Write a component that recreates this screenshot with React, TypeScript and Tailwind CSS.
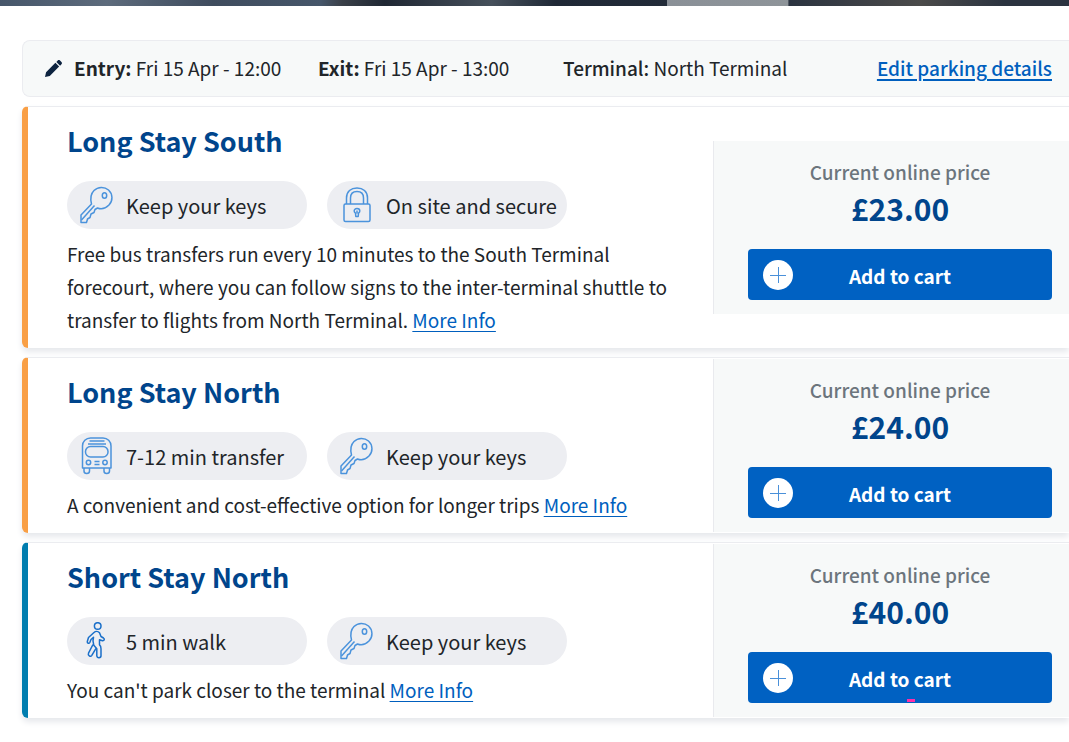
import React from 'react'

type Accent = 'orange' | 'blue'
type FeatureIcon = 'key' | 'lock' | 'bus' | 'walk'

interface Feature {
  icon: FeatureIcon
  label: string
}

interface ParkingOption {
  id: string
  name: string
  accent: Accent
  features: Feature[]
  description: string
  price: string
  flagged?: boolean
}

const options: ParkingOption[] = [
  {
    id: 'long-stay-south',
    name: 'Long Stay South',
    accent: 'orange',
    features: [
      { icon: 'key', label: 'Keep your keys' },
      { icon: 'lock', label: 'On site and secure' }
    ],
    description:
      'Free bus transfers run every 10 minutes to the South Terminal forecourt, where you can follow signs to the inter-terminal shuttle to transfer to flights from North Terminal.',
    price: '£23.00'
  },
  {
    id: 'long-stay-north',
    name: 'Long Stay North',
    accent: 'orange',
    features: [
      { icon: 'bus', label: '7-12 min transfer' },
      { icon: 'key', label: 'Keep your keys' }
    ],
    description: 'A convenient and cost-effective option for longer trips',
    price: '£24.00'
  },
  {
    id: 'short-stay-north',
    name: 'Short Stay North',
    accent: 'blue',
    features: [
      { icon: 'walk', label: '5 min walk' },
      { icon: 'key', label: 'Keep your keys' }
    ],
    description: "You can't park closer to the terminal",
    price: '£40.00',
    flagged: true
  }
]

const KeyIcon = () => (
  <>
    <path d="M12.500 18C11 12 12 7.500 15 4.500c4-4 10.500-4 14.500-.5 4.500 4 4.500 11 .5 15-3.500 3.500-8 4.500-11.500 3l-2.500 1.500-1 3-3 1.500-1 3.500-2.500 1.500-1 3.500H2v-7.500z" />
    <path d="m2.500 34 13-14.500" />
    <ellipse cx="25.500" cy="9.500" rx="2.200" ry="2.800" />
  </>
)

const LockIcon = () => (
  <>
    <rect x="5" y="18" width="26" height="17.500" rx="1.500" />
    <path d="M7.500 18v-6C7.500 5.500 12 2 18 2s10.500 3.500 10.500 10v6" />
    <path d="M11.500 18v-6c0-4 2.500-6.500 6.500-6.500s6.500 2.500 6.500 6.500v6" />
    <path d="M18 22.500c-1.800 0-2.800 1.200-2.800 2.500 0 1 .6 1.700 1.300 2.200l.3 3.300h2.400l.3-3.300c.7-.5 1.300-1.200 1.300-2.200 0-1.300-1-2.500-2.800-2.500zM18 24.500v3" />
  </>
)

const BusIcon = () => (
  <>
    <path d="M3.500 31V9c0-4.500 3.500-8 8-8h12.500c4.500 0 8 3.500 8 8v22z" />
    <path d="M10.500 4h15M9 7h18" />
    <rect x="6.500" y="9.500" width="22.500" height="10.500" rx="5" />
    <circle cx="9.500" cy="25.500" r="2.200" />
    <circle cx="26" cy="25.500" r="2.200" />
    <path d="M15.500 24.500h5M15.500 27.500h5" />
    <path d="M5 31v3c0 1.500 1 2.500 2.700 2.500s2.800-1 2.800-2.500v-3M25 31v3c0 1.500 1 2.500 2.700 2.500s2.800-1 2.800-2.500v-3" />
  </>
)

const WalkIcon = () => (
  <>
    <circle cx="18.700" cy="4" r="3.300" />
    <path d="M15 10.500c1.500-1.300 4-1.300 5.500.3l1.500 3.700 2.500 1.500c1.500 1 .8 3-1 2.800l-3-1v5c1.300 1 1.500 2 1.500 4v7c0 2.500-4 2.500-4.200 0v-7l-3-3.500-.8-4.500.5-3.500-2.500 2.200-1.200 3c-.8 1.500-2.800.8-2.500-1l1.200-4z" />
    <path d="m14 22.500-4.500 8.700c-1 2.300 2 4 3.300 2.100l4.200-7" />
  </>
)

const icons: Record<FeatureIcon, React.FC> = {
  key: KeyIcon,
  lock: LockIcon,
  bus: BusIcon,
  walk: WalkIcon
}

const FeaturePill = ({ icon, label }: Feature) => {
  const Icon = icons[icon]

  return (
    <li className="flex h-12 w-60 items-center rounded-full bg-[#edeef2] pl-3">
      <svg
        viewBox="0 0 36 38"
        className={`h-[38px] w-9 shrink-0 ${icon === 'walk' ? 'text-[#1a6fc9]' : 'text-[#4b93dc]'}`}
        fill="none"
        stroke="currentColor"
        strokeWidth="1.5"
        strokeLinejoin="round"
        aria-hidden="true"
      >
        <Icon />
      </svg>
      <span className="pt-px pl-[11px] text-[20px] whitespace-nowrap">{label}</span>
    </li>
  )
}

const ParkingCard = ({ option }: { option: ParkingOption }) => (
  <article
    className={`flex rounded-l-md border-t border-l-6 border-t-[#ebecf0] bg-white shadow-[0_4px_6px_#e6e8ec] ${
      option.accent === 'orange' ? 'border-l-[#f99f45]' : 'border-l-[#007daf]'
    }`}
  >
    <div className="min-w-0 flex-1 pt-4 pr-9 pb-3 pl-[39px]">
      <h2 className="text-[27px] leading-9 font-bold text-[#00458c]">{option.name}</h2>
      <ul className="mt-[22px] flex gap-5">
        {option.features.map((feature) => (
          <FeaturePill key={feature.label} {...feature} />
        ))}
      </ul>
      <p className="mt-2 text-[19px] leading-[33px]">
        {option.description}{' '}
        <a href="#" className="whitespace-nowrap text-[#005fbe] underline underline-offset-3">
          More Info
        </a>
      </p>
    </div>

    {/* Price panel */}
    <div className="flex w-1/3 min-w-[356px] flex-col self-center border-l border-[#e9eaee] bg-[#f7f9f9] pt-[15px] pr-[17px] pb-[14px] pl-[34px] text-center">
      <p className="text-[19px] leading-8 font-medium text-[#6c757d]">Current online price</p>
      <p className="text-[30px] leading-10 font-bold text-[#00458c]">{option.price}</p>
      <button
        type="button"
        className="relative mt-[21px] flex h-[51px] items-center justify-center rounded bg-[#0061c2] pt-1 text-[19px] font-bold text-white"
      >
        <span className="absolute top-[11px] left-[15px] flex size-[30px] items-center justify-center rounded-full bg-white">
          <svg viewBox="0 0 16 16" className="size-4" stroke="#4a90d9" strokeWidth="1" aria-hidden="true">
            <path d="M8.500 0v16M0 8.500h16" />
          </svg>
        </span>
        Add to cart
        {option.flagged && <span className="absolute right-[137px] bottom-px h-[3px] w-2 bg-[#ff2fa8]" />}
      </button>
    </div>
  </article>
)

const App = () => (
  <div className="min-h-screen overflow-x-hidden bg-white font-['Noto_Sans_CJK_SC','Noto_Sans',sans-serif] text-[#212529]">
    {/* Bottom edge of the hero photo */}
    <div className="h-[6px] bg-[linear-gradient(90deg,#46566a_0%,#5d6b7c_10%,#3f4c5e_20%,#46566a_30%,#3a4048_32%,#1f2733_36%,#46505b_46%,#1f2836_52%,#222b38_62.400%,#8a9097_62.400%,#8e9499_73.700%,#2b3340_73.800%,#4b4b4a_86%,#2b3340_94%)]" />

    <main className="mt-[34px] flex flex-col gap-[9px] pb-6 pl-[22px]">
      <section className="flex h-[57px] items-center rounded-l-lg border border-r-0 border-[#ebecf0] bg-[#f7f9f9] pr-[17px] pl-[22px] text-[19px] whitespace-nowrap">
        <svg viewBox="0 0 16 16" className="mr-3 size-[17px] shrink-0 text-[#0d2340]" fill="currentColor" aria-hidden="true">
          <path d="m0 16 1-4.500L9.800 2.700l3.500 3.500L4.500 15zM10.700 1.800 12 .5c.6-.6 1.500-.6 2.100 0l1.400 1.400c.6.600.6 1.500 0 2.100l-1.300 1.300z" />
        </svg>
        <p className="w-[244px]">
          <b>Entry:</b> Fri 15 Apr - 12:00
        </p>
        <p className="w-[245px]">
          <b>Exit:</b> Fri 15 Apr - 13:00
        </p>
        <p>
          <span className="font-medium">Terminal:</span> North Terminal
        </p>
        <a href="#" className="ml-auto font-medium text-[#005fbe] underline decoration-2 underline-offset-3">
          Edit parking details
        </a>
      </section>

      {options.map((option) => (
        <ParkingCard key={option.id} option={option} />
      ))}
    </main>
  </div>
)

export default App
